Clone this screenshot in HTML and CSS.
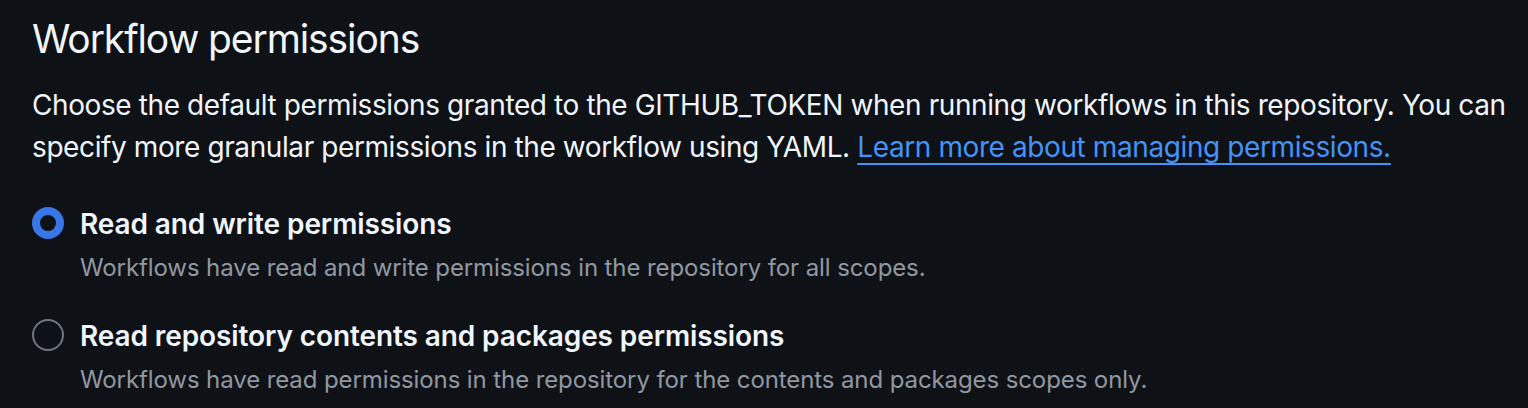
FILE: index.html
```html
<!DOCTYPE html>
<html lang="en">
<head>
<meta charset="utf-8">
<title>Workflow permissions</title>
<link rel="stylesheet" href="styles.css">
</head>
<body>
<main class="section">
  <h2 class="heading">Workflow permissions</h2>
  <p class="intro">Choose the default permissions granted to the GITHUB_TOKEN when running workflows in this repository. You can specify more granular permissions in the workflow using YAML. <a class="link" href="#">Learn more about managing permissions.</a></p>
  <div class="options">
    <label class="option">
      <span class="radio radio-checked"></span>
      <span class="option-text">
        <span class="option-title">Read and write permissions</span>
        <span class="option-desc">Workflows have read and write permissions in the repository for all scopes.</span>
      </span>
    </label>
    <label class="option">
      <span class="radio"></span>
      <span class="option-text">
        <span class="option-title">Read repository contents and packages permissions</span>
        <span class="option-desc">Workflows have read permissions in the repository for the contents and packages scopes only.</span>
      </span>
    </label>
  </div>
</main>
</body>
</html>
```

FILE: styles.css
```css
html, body {
  margin: 0;
  padding: 0;
  background: #0e1116;
}

body {
  font-family: Inter, "Noto Sans", "Liberation Sans", sans-serif;
  color: #f0f6fc;
}

.section {
  padding: 14px 12px 0 32px;
}

.heading {
  margin: 0;
  font-size: 39px;
  line-height: 50px;
  font-weight: 400;
  letter-spacing: -1.1px;
  color: #f0f6fc;
}

.intro {
  margin: 20px 0 0 0;
  font-size: 28px;
  line-height: 42px;
  letter-spacing: -0.4px;
  color: #f0f6fc;
}

.link {
  color: #4493f8;
  text-decoration: underline;
  text-underline-offset: 6px;
  text-decoration-thickness: 2px;
}

.options {
  display: flex;
  flex-direction: column;
  gap: 29px;
  margin-top: 35px;
}

.option {
  display: flex;
  align-items: flex-start;
  gap: 16px;
}

.radio {
  flex: none;
  box-sizing: border-box;
  width: 32px;
  height: 32px;
  margin-top: 4px;
  border-radius: 50%;
  border: 2px solid #6e7681;
  background: #0e1116;
}

.radio-checked {
  border: 8px solid #3876e6;
}

.option-text {
  display: flex;
  flex-direction: column;
  gap: 5px;
}

.option-title {
  font-size: 28px;
  line-height: 42px;
  font-weight: 600;
  letter-spacing: -0.1px;
  color: #f0f6fc;
}

.option-desc {
  font-size: 24px;
  line-height: 36px;
  letter-spacing: -0.1px;
  color: #9198a1;
}
```
